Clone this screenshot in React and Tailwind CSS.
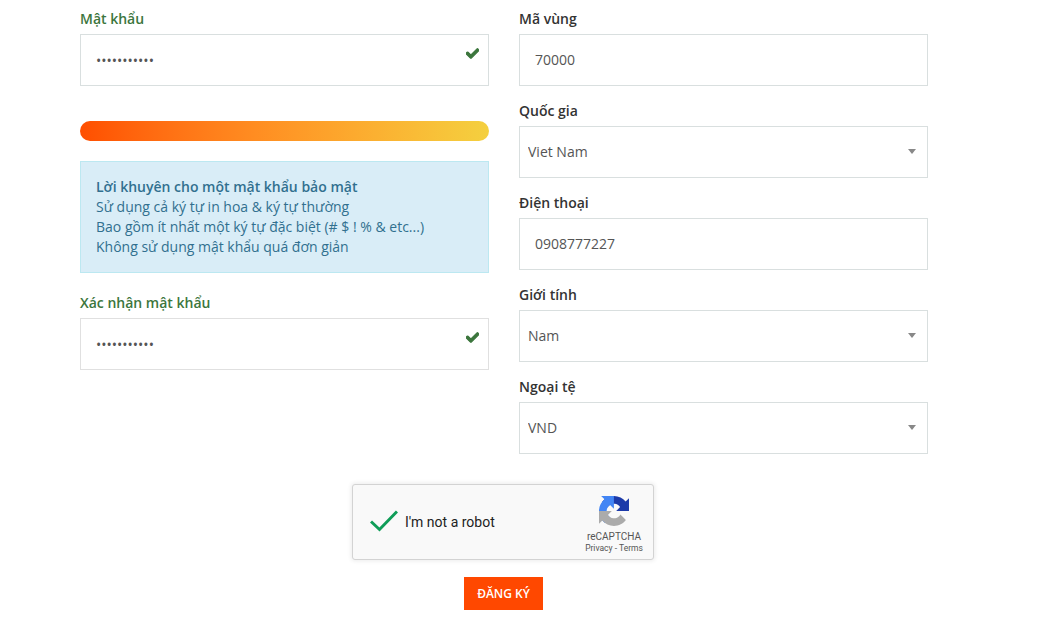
import { FaCheck } from 'react-icons/fa';

function Field({ label, labelClass = 'text-[#333]', children }) {
    return (
        <div className="mb-[15px]">
            <label className={`block h-5 mb-[5px] text-sm leading-5 font-semibold ${labelClass}`}>{label}</label>
            {children}
        </div>
    );
}

function TextInput({ value }) {
    return (
        <input
            readOnly
            value={value}
            className="block w-full h-[52px] px-[15px] pb-[2px] border border-[#d9dfdf] bg-white text-sm text-[#555] outline-none"
        />
    );
}

function PasswordInput({ borderClass = 'border-[#d9dfdf]' }) {
    return (
        <div className="relative">
            <input
                readOnly
                type="password"
                value="12345678901"
                className={`block w-full h-[52px] px-[15px] border ${borderClass} bg-white text-sm text-[#555] outline-none`}
            />
            <FaCheck className="absolute right-[10px] top-[13px] text-[#3c763d] stroke-[#3c763d] stroke-[40px]" size={13} />
        </div>
    );
}

function SelectInput({ value }) {
    return (
        <div className="relative">
            <select
                value={value}
                onChange={() => {}}
                className="block w-full h-[52px] pl-2 pr-8 border border-[#d9dfdf] bg-white text-sm text-[#555] outline-none appearance-none"
            >
                <option>{value}</option>
            </select>
            <span className="absolute right-[12px] top-[23px] w-0 h-0 border-x-[4px] border-x-transparent border-t-[5px] border-t-[#888]" />
        </div>
    );
}

function RecaptchaLogo() {
    return (
        <svg viewBox="0 0 64 64" className="w-[30px] h-[30px]">
            <path fill="#1c3aa9" d="M64 31.955l-.033-1.37V4.687l-7.16 7.16C50.948 4.674 42.033.093 32.05.093c-10.4 0-19.622 4.96-25.458 12.64l11.736 11.86a15.55 15.55 0 0 1 4.754-5.334c2.05-1.6 4.952-2.906 8.968-2.906.485 0 .86.057 1.135.163 4.976.393 9.288 3.14 11.828 7.125l-8.307 8.307c10.522-.04 22.4-.066 27.295.006" />
            <path fill="#4285f4" d="M31.862.001l-1.37.033H4.594l7.16 7.16C4.58 13.053 0 21.968 0 31.95c0 10.4 4.96 19.622 12.64 25.458l11.86-11.736a15.55 15.55 0 0 1-5.334-4.754c-1.6-2.05-2.906-4.952-2.906-8.968 0-.485.057-.86.163-1.135.393-4.976 3.14-9.288 7.125-11.828l8.307 8.307c-.04-10.522-.066-22.4.006-27.295" />
            <path fill="#ababab" d="M.001 32l.033 1.37v25.898l7.16-7.16C13.053 59.28 21.968 63.86 31.95 63.86c10.4 0 19.622-4.96 25.458-12.64L45.672 39.36a15.55 15.55 0 0 1-4.754 5.334c-2.05 1.6-4.952 2.906-8.968 2.906-.485 0-.86-.057-1.135-.163-4.976-.393-9.288-3.14-11.828-7.125l8.307-8.307c-10.522.04-22.4.066-27.295-.006" />
        </svg>
    );
}

function Recaptcha() {
    return (
        <div className="flex items-center w-[302px] h-[76px] rounded-[3px] border border-[#d3d3d3] bg-[#f9f9f9] shadow-[0_0_4px_1px_rgba(0,0,0,0.08)] font-['Roboto',sans-serif]">
            <svg viewBox="0 0 28 22" className="ml-[17px] w-7 h-[22px] shrink-0 -mt-[2px]">
                <path d="M1 11.5 L9.5 19.5 L27 1.5" fill="none" stroke="#0f9d58" strokeWidth="3" />
            </svg>
            <span className="ml-[7px] text-sm text-[#222]">I'm not a robot</span>
            <div className="ml-auto mr-[10px] w-[58px] self-start pt-[11px] flex flex-col items-center">
                <RecaptchaLogo />
                <span className="mt-[5px] text-[10px] leading-[12px] text-[#555]">reCAPTCHA</span>
                <span className="text-[8.5px] leading-[10px] text-[#555] whitespace-nowrap">Privacy - Terms</span>
            </div>
        </div>
    );
}

export default function App() {
    return (
        <div className="w-[1056px] h-[626px] overflow-hidden bg-white pt-[9px] pl-20 font-['Open_Sans',sans-serif]">
            <div className="w-[848px]">
                <div className="grid grid-cols-2 gap-x-[30px]">
                    <div>
                        <Field label="Mật khẩu" labelClass="text-[#3c763d]">
                            <PasswordInput />
                        </Field>
                        <div className="mt-[35px] h-5 rounded-full bg-gradient-to-r from-[#ff4e00] to-[#f4d03f]" />
                        <div className="mt-5 h-[112px] px-[15px] py-[15px] border border-[#bce8f1] bg-[#d9edf7] text-sm leading-5 text-[#31708f]">
                            <p className="font-semibold">Lời khuyên cho một mật khẩu bảo mật</p>
                            <p>Sử dụng cả ký tự in hoa &amp; ký tự thường</p>
                            <p>Bao gồm ít nhất một ký tự đặc biệt (# $ ! % &amp; etc...)</p>
                            <p>Không sử dụng mật khẩu quá đơn giản</p>
                        </div>
                        <div className="mt-5">
                            <Field label="Xác nhận mật khẩu" labelClass="text-[#3c763d]">
                                <PasswordInput borderClass="border-[#e0e0e0]" />
                            </Field>
                        </div>
                    </div>
                    <div>
                        <Field label="Mã vùng"><TextInput value="70000" /></Field>
                        <Field label="Quốc gia"><SelectInput value="Viet Nam" /></Field>
                        <Field label="Điện thoại"><TextInput value="0908777227" /></Field>
                        <Field label="Giới tính"><SelectInput value="Nam" /></Field>
                        <Field label="Ngoại tệ"><SelectInput value="VND" /></Field>
                    </div>
                </div>
                <div className="flex flex-col items-center mt-[15px] pr-[2px]">
                    <Recaptcha />
                    <button className="mt-[17px] w-[79px] h-[33px] pl-[1px] bg-[#ff4800] text-xs font-semibold text-white">ĐĂNG KÝ</button>
                </div>
            </div>
        </div>
    );
}
